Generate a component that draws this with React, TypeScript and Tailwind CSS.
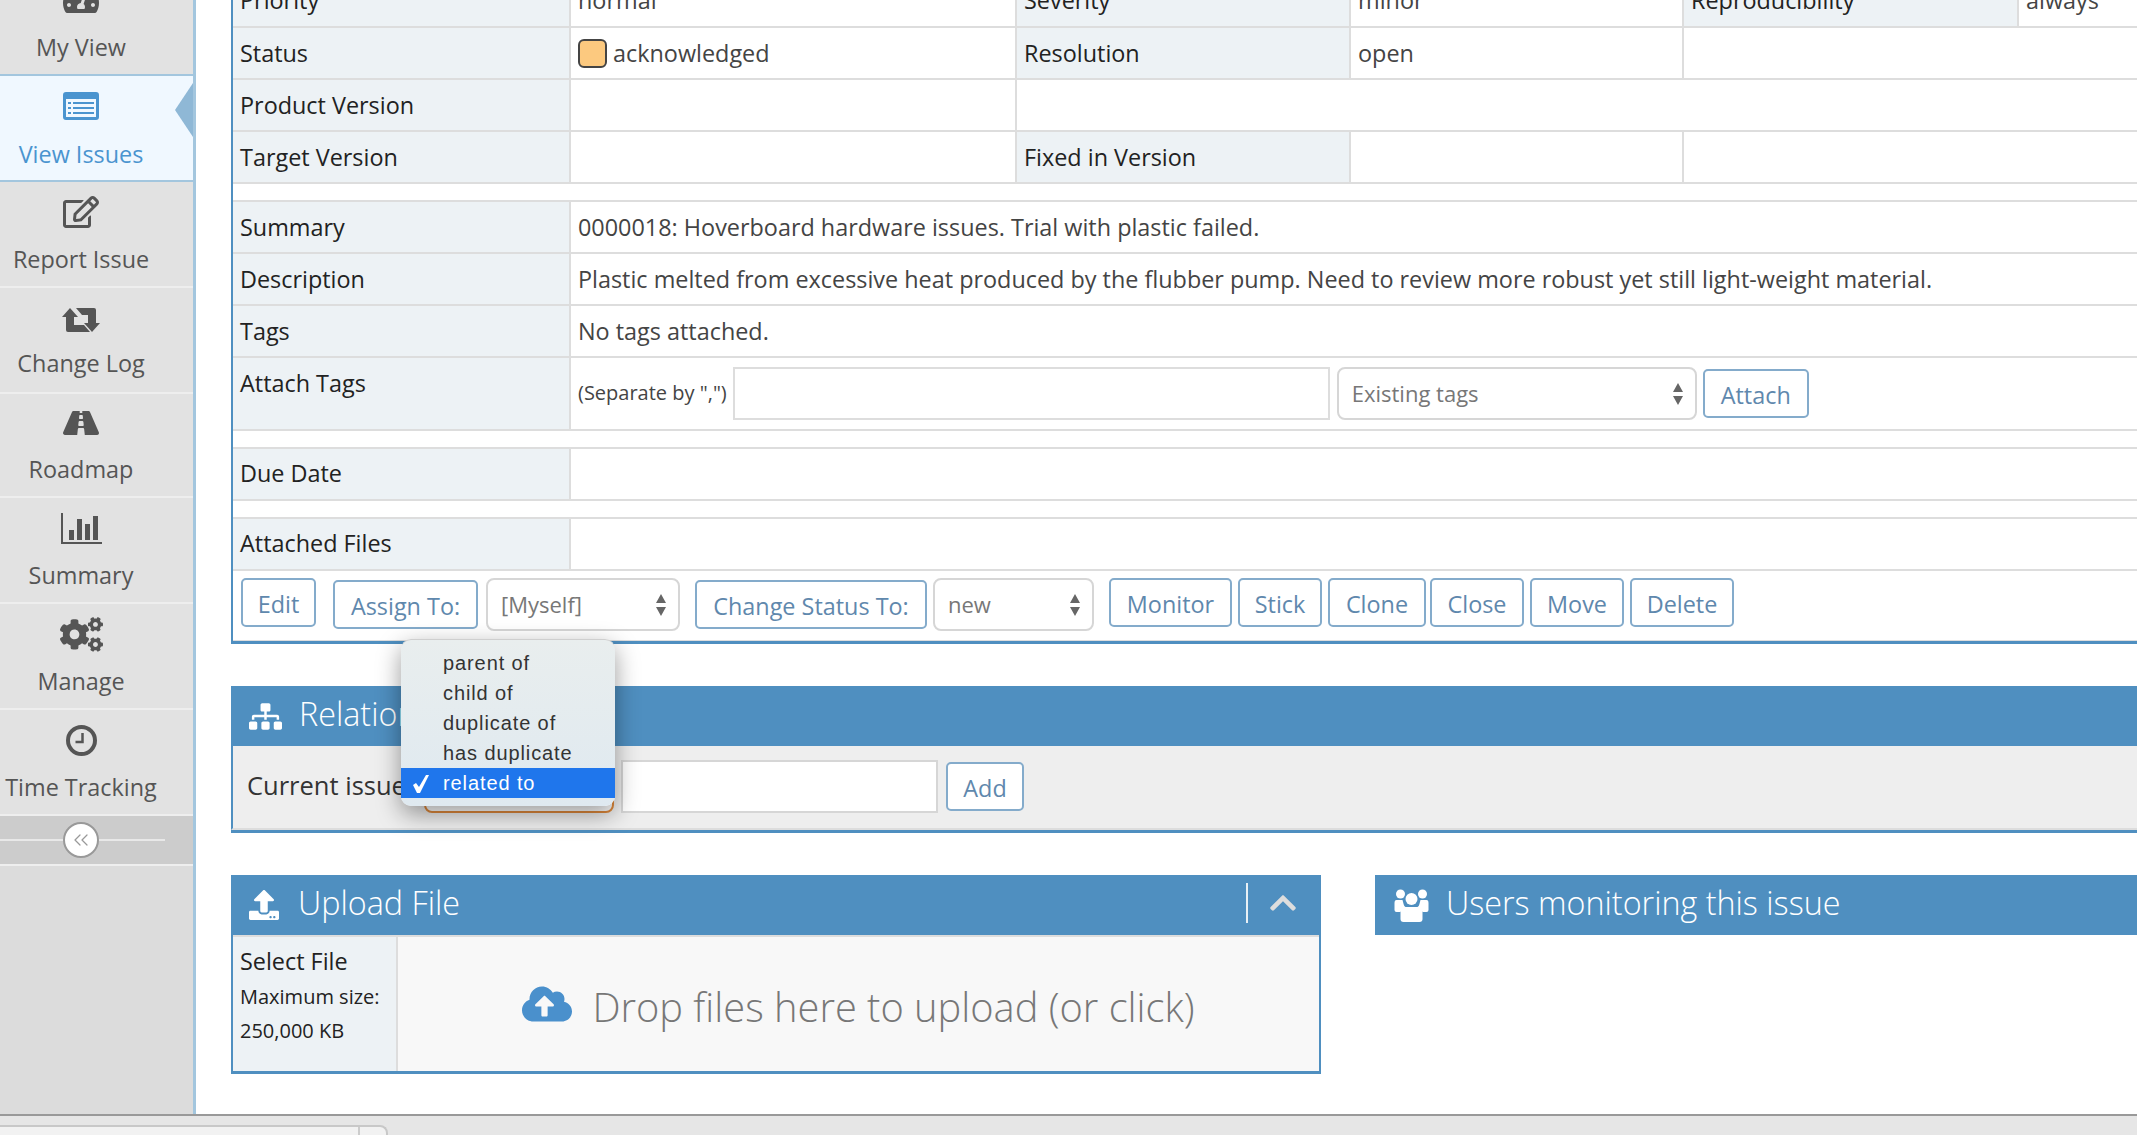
import React from 'react';
import { FaTachometerAlt, FaRegEdit, FaRoad, FaCogs, FaSitemap, FaUpload, FaCloudUploadAlt, FaChevronUp } from 'react-icons/fa';
import { ChevronsLeft } from 'lucide-react';

function ListAltIcon() {
  return (
    <svg width="36" height="28" viewBox="0 0 36 28" fill="currentColor">
      <path fillRule="evenodd" d="M3 0h30a3 3 0 013 3v22a3 3 0 01-3 3H3a3 3 0 01-3-3V3a3 3 0 013-3zM3 7v18h30V7z" />
      <path d="M5 10h3v2H5zM10 10h21v2H10zM5 15h3v2H5zM10 15h21v2H10zM5 20h3v2H5zM10 20h21v2H10z" />
    </svg>
  );
}

function BarChartIcon() {
  return (
    <svg width="41" height="31" viewBox="0 0 41 31" fill="currentColor">
      <path d="M0 0h2v29h39v2H0z" />
      <path d="M8 17h5v10H8zM16 6h5v21h-5zM24 11h5v16h-5zM32 3h5v24h-5z" />
    </svg>
  );
}

function RetweetIcon() {
  return (
    <svg width="38" height="24" viewBox="0 0 38 24" fill="currentColor">
      <path d="M8 0l8 9h-4v8h10l6 7H6a2 2 0 01-2-2V9H0z" />
      <path d="M30 24l-8-9h4V7H20l-6-7h18a2 2 0 012 2v13h4z" />
    </svg>
  );
}

function ClockIcon() {
  return (
    <svg width="31" height="31" viewBox="0 0 31 31" fill="none" stroke="currentColor">
      <circle cx="15.5" cy="15.5" r="13.5" strokeWidth="4" />
      <path d="M16.5 8v9h-7" strokeWidth="2.5" />
    </svg>
  );
}

function UsersIcon() {
  return (
    <svg width="35" height="33" viewBox="0 0 34 33" fill="currentColor" className="ml-[19px] mr-[17px]">
      <circle cx="6" cy="5" r="4.5" />
      <circle cx="28" cy="5" r="4.5" />
      <circle cx="17" cy="10" r="6" />
      <path d="M2 11h6c1 3 1 6 3 7-2 1-4 2-5 5H2q-2 0-2-2v-7q0-3 2-3zM32 11h-6c-1 3-1 6-3 7 2 1 4 2 5 5h4q2 0 2-2v-7q0-3-2-3z" />
      <path d="M10 18h14q4 0 4 5v7q0 3-3 3H9q-3 0-3-3v-7q0-5 4-5z" />
    </svg>
  );
}

const navItems = [
  { label: 'My View', icon: <FaTachometerAlt size={36} />, cls: 'h-[107px] -mt-[31px] pt-[14px]', gap: 'mt-[16px]' },
  { label: 'View Issues', icon: <ListAltIcon />, cls: 'h-[108px] -mt-[2px] pt-[14px]', gap: 'mt-[16px]', active: true },
  { label: 'Report Issue', icon: <FaRegEdit size={36} />, cls: 'h-[106px] pt-[14px]', gap: 'mt-[15px]' },
  { label: 'Change Log', icon: <RetweetIcon />, cls: 'h-[106px] pt-[16px]', gap: 'mt-[11px]' },
  { label: 'Roadmap', icon: <FaRoad size={36} />, cls: 'h-[104px] pt-[13px]', gap: 'mt-[14px]' },
  { label: 'Summary', icon: <BarChartIcon />, cls: 'h-[106px] pt-[14px]', gap: 'mt-[15px]' },
  { label: 'Manage', icon: <FaCogs size={43} />, cls: 'h-[106px] pt-[14px]', gap: 'mt-[15px]' },
  { label: 'Time Tracking', icon: <ClockIcon />, cls: 'h-[106px] pt-[14px]', gap: 'mt-[15px]' },
];

function Sidebar() {
  return (
    <aside className="w-[196px] shrink-0 flex flex-col bg-[#dcdcdc] border-r-[3px] border-[#a3c6de]">
      {navItems.map(item => (
        <div
          key={item.label}
          className={`${item.cls} relative shrink-0 flex flex-col items-center pr-[31px] border-b-2 ${
            item.active ? 'bg-[#f0f8ff] border-[#a3c6de] text-[#4a94cf] font-medium border-t-2' : 'bg-[#e2e2e2] border-[#eeeeee] text-[#555555]'
          }`}
        >
          <div className="h-8 flex items-center justify-center">{item.icon}</div>
          <div className={`${item.gap} h-8 leading-8 whitespace-nowrap`}>{item.label}</div>
          {item.active && (
            <div className="absolute right-0 top-[7px] w-0 h-0 border-y-[27px] border-y-transparent border-r-[18px] border-r-[#8fb8d6]" />
          )}
        </div>
      ))}
      <div className="relative h-[50px] shrink-0 bg-[#cccccc] border-b-2 border-[#eeeeee] flex items-center">
        <div className="w-[165px] h-[2px] bg-[#e8e8e8]" />
        <div className="absolute left-[63px] top-[6px] w-9 h-9 rounded-full bg-white border-2 border-[#999999] flex items-center justify-center text-[#999999]">
          <ChevronsLeft size={24} strokeWidth={1.25} />
        </div>
      </div>
    </aside>
  );
}

function Label({ children }: { children?: React.ReactNode }) {
  return <div className="bg-[#edf2f5] border-r-2 border-[#dddddd] px-[7px] pt-[2px] flex items-center text-[#222222] whitespace-nowrap">{children}</div>;
}

function Value({ children, className = '' }: { children?: React.ReactNode; className?: string }) {
  return <div className={`border-r-2 border-[#dddddd] px-[7px] pt-[2px] flex items-center text-[#444444] whitespace-nowrap ${className}`}>{children}</div>;
}

function Row({ children, className = 'h-[52px]' }: { children: React.ReactNode; className?: string }) {
  return (
    <div className={`grid grid-cols-[338px_446px_334px_333px_335px_1fr] border-b-2 border-[#dddddd] ${className}`}>
      {children}
    </div>
  );
}

function WideRow({ label, children, className = 'h-[52px]', top, pad = 'pt-[2px]' }: { label: string; children?: React.ReactNode; className?: string; top?: boolean; pad?: string }) {
  return (
    <div className={`grid grid-cols-[338px_1fr] border-b-2 border-[#dddddd] ${className}`}>
      <div className={`bg-[#edf2f5] border-r-2 border-[#dddddd] px-[7px] flex text-[#222222] ${top ? 'pt-[8px]' : `items-center ${pad}`}`}>{label}</div>
      <div className={`px-[7px] flex items-center text-[#444444] whitespace-nowrap ${top ? '' : pad}`}>{children}</div>
    </div>
  );
}

function Btn({ children, className = '' }: { children: React.ReactNode; className?: string }) {
  return (
    <button className={`${className} h-[49px] shrink-0 pt-[4px] bg-white border-2 border-[#84abcb] rounded-[5px] text-[#5f88ad] whitespace-nowrap`}>
      {children}
    </button>
  );
}

function FakeSelect({ value, className }: { value: string; className: string }) {
  return (
    <div className={`${className} shrink-0 h-[53px] bg-white border-2 border-[#d6d6d6] rounded-[8px] pl-[13px] pr-[12px] flex items-center justify-between text-[#777777] text-[22px]`}>
      <span>{value}</span>
      <svg width="10" height="24" viewBox="0 0 10 24" fill="#666666">
        <path d="M5 1l5 9H0zM0 14h10l-5 9z" />
      </svg>
    </div>
  );
}

function WidgetHeader({ icon, title, className = '' }: { icon: React.ReactNode; title: string; className?: string }) {
  return (
    <div className={`h-[60px] bg-[#4f8fc0] text-white flex items-center text-[32.3px] font-light whitespace-nowrap ${className}`}>
      {icon}
      <span className="pb-[5px]">{title}</span>
    </div>
  );
}

const popupOptions = ['parent of', 'child of', 'duplicate of', 'has duplicate', 'related to'];

function RelationPopup() {
  return (
    <div className="absolute left-[170px] -top-[47px] w-[214px] h-[167px] z-10 pt-[8px] rounded-[10px] bg-gradient-to-b from-[#e9eeee] to-[#dfe9f0] border-t border-[#cfcfcf] shadow-[0_8px_24px_rgba(0,0,0,0.4)] font-['Liberation_Sans',sans-serif] text-[20px] tracking-[0.9px] text-[#333333]">
      {popupOptions.map(opt => (
        <div key={opt} className={`relative h-[30px] pl-[42px] leading-[30px] ${opt === 'related to' ? 'bg-[#1f76ec] text-white' : ''}`}>
          {opt === 'related to' && (
            <svg className="absolute left-[11px] top-[7px]" width="18" height="18" viewBox="0 0 18 18" fill="white">
              <path d="M1 10l3-2 3 4 7-12h3L8 18H5z" />
            </svg>
          )}
          {opt}
        </div>
      ))}
    </div>
  );
}

function IssueTable() {
  return (
    <div className="w-[1950px] border-l-2 border-[#4f8fc0] border-b-[3px] border-b-[#4f8fc0]">
      <Row className="h-[54px]">
        <Label>Priority</Label>
        <Value>normal</Value>
        <Label>Severity</Label>
        <Value>minor</Value>
        <Label>Reproducibility</Label>
        <div className="px-[7px] pt-[2px] flex items-center text-[#444444]">always</div>
      </Row>
      <Row>
        <Label>Status</Label>
        <Value>
          <span className="inline-block w-[29px] h-[29px] mr-[6px] -mt-[2px] bg-[#fcc97f] border-2 border-[#444444] rounded-[6px]" />
          acknowledged
        </Value>
        <Label>Resolution</Label>
        <Value>open</Value>
        <div className="col-span-2" />
      </Row>
      <Row>
        <Label>Product Version</Label>
        <Value />
        <div className="col-span-4" />
      </Row>
      <Row>
        <Label>Target Version</Label>
        <Value />
        <Label>Fixed in Version</Label>
        <Value />
        <div className="col-span-2" />
      </Row>
      <div className="h-[18px] border-b-2 border-[#dddddd] bg-white" />
      <WideRow label="Summary">0000018: Hoverboard hardware issues. Trial with plastic failed.</WideRow>
      <WideRow label="Description">Plastic melted from excessive heat produced by the flubber pump. Need to review more robust yet still light-weight material.</WideRow>
      <WideRow label="Tags">No tags attached.</WideRow>
      <WideRow label="Attach Tags" className="h-[73px]" top>
        <span className="text-[20px] mr-[6px] -mt-[2px]">(Separate by ",")</span>
        <div className="w-[597px] h-[53px] bg-white border-2 border-[#dddddd] shrink-0" />
        <FakeSelect value="Existing tags" className="w-[360px] ml-[7px]" />
        <Btn className="w-[106px] ml-[6px]">Attach</Btn>
      </WideRow>
      <div className="h-[18px] border-b-2 border-[#dddddd] bg-white" />
      <WideRow label="Due Date" pad="" />
      <div className="h-[18px] border-b-2 border-[#dddddd] bg-white" />
      <WideRow label="Attached Files" pad="" />
      <div className="h-[70px] border-b border-[#dddddd] flex items-start pt-[7px] pl-[8px]">
        <Btn className="w-[75px]">Edit</Btn>
        <Btn className="w-[145px] mt-[2px] ml-[17px]">Assign To:</Btn>
        <FakeSelect value="[Myself]" className="w-[194px] ml-[8px]" />
        <Btn className="w-[232px] mt-[2px] ml-[15px]">Change Status To:</Btn>
        <FakeSelect value="new" className="w-[161px] ml-[6px]" />
        <Btn className="w-[123px] ml-[15px]">Monitor</Btn>
        <Btn className="w-[84px] ml-[6px]">Stick</Btn>
        <Btn className="w-[98px] ml-[6px]">Clone</Btn>
        <Btn className="w-[94px] ml-[4px]">Close</Btn>
        <Btn className="w-[94px] ml-[6px]">Move</Btn>
        <Btn className="w-[104px] ml-[6px]">Delete</Btn>
      </div>
    </div>
  );
}

function Relationships() {
  return (
    <div className="relative mt-[42px] w-[1950px] border-b-[3px] border-[#4f8fc0]">
      <WidgetHeader icon={<FaSitemap size={33} className="ml-[18px] mr-[17px]" />} title="Relationships" />
      <div className="h-[84px] bg-[#eeeeee] border-l-2 border-[#4f8fc0] border-b-2 border-b-[#dddddd] flex items-start pt-[14px] pl-[14px]">
        <div className="w-[177px] shrink-0 h-[53px] pb-[3px] flex items-center text-[25.5px] text-[#333333] whitespace-nowrap">Current issue</div>
        <div className="w-[190px] shrink-0 h-[53px] bg-white border-2 border-[#e08a3c] rounded-[8px]" />
        <div className="w-[317px] shrink-0 h-[53px] ml-[7px] bg-white border-2 border-[#d6d6d6]" />
        <Btn className="w-[78px] ml-[8px] mt-[2px]">Add</Btn>
      </div>
      <RelationPopup />
    </div>
  );
}

function UploadRow() {
  return (
    <div className="mt-[42px] flex items-start">
      <div className="w-[1090px] shrink-0">
        <div className="relative">
          <WidgetHeader icon={<FaUpload size={30} className="ml-[18px] mr-[19px]" />} title="Upload File" />
          <div className="absolute left-[1015px] top-[8px] w-[2px] h-[40px] bg-[#e8f0f5]" />
          <FaChevronUp size={30} className="absolute left-[1037px] top-[13px] text-[#dddddd]" />
        </div>
        <div className="h-[139px] flex border-x-2 border-b-[3px] border-[#4f8fc0] border-t-0">
          <div className="w-[165px] shrink-0 bg-[#edf2f5] border-r-2 border-t-2 border-[#dddddd] pl-[7px] pt-[7px] text-[#222222]">
            <div className="leading-[34px]">Select File</div>
            <div className="mt-[2px] text-[20px] leading-[34px]">Maximum size:</div>
            <div className="text-[20px] leading-[34px]">250,000 KB</div>
          </div>
          <div className="flex-1 bg-[#f8f8f8] border-t-2 border-[#dddddd] flex items-center justify-center text-[#777777] text-[39.8px] font-light">
            <FaCloudUploadAlt size={50} className="text-[#4a90cc] mr-[20px]" />
            <span className="pt-[5px]">Drop files here to upload (or click)</span>
          </div>
        </div>
      </div>
      <div className="ml-[54px] w-[800px] shrink-0">
        <WidgetHeader icon={<UsersIcon />} title="Users monitoring this issue" />
      </div>
    </div>
  );
}

export default function App() {
  return (
    <div className="h-[1135px] w-[2137px] overflow-hidden flex flex-col bg-white font-['Open_Sans',sans-serif] text-[23.4px]">
      <div className="flex-1 min-h-0 flex overflow-hidden">
        <Sidebar />
        <main className="flex-1 min-w-0 overflow-hidden pl-[35px] -mt-[26px]">
          <IssueTable />
          <Relationships />
          <UploadRow />
        </main>
      </div>
      <div className="h-[21px] shrink-0 bg-[#e6e6e6] border-t-2 border-[#999999] pt-[9px]">
        <div className="w-[388px] h-full bg-[#f2f2f2] border-t-2 border-r-2 border-[#c8c8c8] rounded-tr-[8px] flex justify-end pr-[26px]">
          <div className="w-[2px] h-full bg-[#cccccc]" />
        </div>
      </div>
    </div>
  );
}
